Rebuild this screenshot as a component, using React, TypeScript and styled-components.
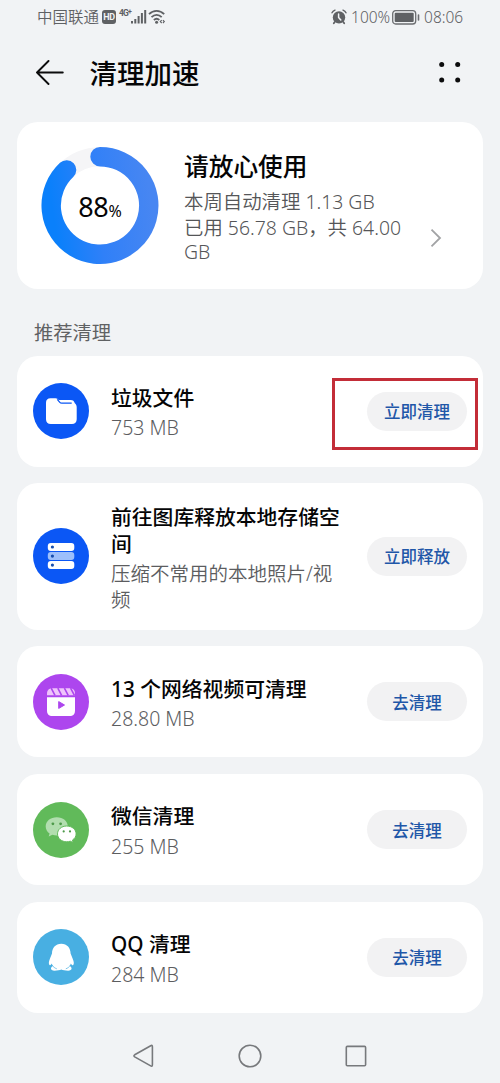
import React from "react";
import styled, { createGlobalStyle } from "styled-components";

const GlobalStyle = createGlobalStyle`
  * { box-sizing: border-box; }
  body {
    margin: 0;
    background: #f1f3f5;
    font-family: "Noto Sans", "Noto Sans CJK SC", sans-serif;
    color: #050506;
  }
`;

const Screen = styled.div`
  width: 500px;
  height: 1083px;
  overflow: hidden;
  display: flex;
  flex-direction: column;
  background: #f1f3f5;
`;

const StatusBar = styled.div`
  height: 34px;
  padding: 0 35px 0 37px;
  display: flex;
  align-items: center;
  justify-content: space-between;
  color: #5f6164;
  font-size: 15.5px;
  font-weight: 350;
  line-height: 20px;
`;

const StatusGroup = styled.div`
  display: flex;
  align-items: center;
  height: 34px;
`;

const StatusText = styled.span<{ $width: number }>`
  width: ${(p) => p.$width}px;
  white-space: nowrap;
`;

const HdBadge = styled.span`
  width: 14px;
  height: 14px;
  margin: 0 3px 0 3px;
  border-radius: 3px;
  background: #5f6164;
  color: #f1f3f5;
  font: 700 9px/14px Roboto, sans-serif;
  letter-spacing: -0.3px;
  text-align: center;
`;

const NetworkType = styled.span`
  display: flex;
  width: 12px;
  height: 17px;
  font: 700 8.5px/9px Roboto, sans-serif;
  letter-spacing: -0.8px;
  white-space: nowrap;
  sup { font-size: 7px; line-height: 6px; }
`;

const Header = styled.header`
  height: 78px;
  padding: 0 38px 0 35px;
  display: flex;
  align-items: center;
`;

const PageTitle = styled.h1`
  margin: 0 0 0 25.5px;
  padding-top: 2px;
  flex: 1;
  font-size: 27.5px;
  line-height: 36px;
  font-weight: 500;
`;

const Hero = styled.section`
  height: 167px;
  margin: 10px 17px 0;
  padding: 0 41px 0 24px;
  display: flex;
  align-items: center;
  background: #fff;
  border-radius: 21px;
`;

const RingBox = styled.div`
  width: 118px;
  height: 118px;
  display: grid;
  place-items: center;
  & > * { grid-area: 1 / 1; }
`;

const Percent = styled.div`
  font-size: 27px;
  line-height: 30px;
  letter-spacing: -0.3px;
  padding-top: 6px;
  small { font-size: 16px; letter-spacing: 0; }
`;

const HeroText = styled.div`
  width: 238px;
  margin-left: 25px;
  white-space: nowrap;
`;

const HeroTitle = styled.h2`
  margin: 0 0 4px;
  font-size: 24.7px;
  line-height: 36px;
  font-weight: 500;
`;

const HeroLine = styled.div<{ $height?: number }>`
  font-size: 19.4px;
  font-weight: 350;
  line-height: ${(p) => p.$height ?? 26}px;
  color: #555658;
`;

const HeroChevron = styled.div`
  display: flex;
  flex: 1;
  justify-content: flex-end;
  padding-top: 64px;
`;

const SectionLabel = styled.h3`
  margin: 0;
  height: 66.5px;
  padding: 30px 0 0 34px;
  font-size: 19.3px;
  line-height: 28px;
  font-weight: 400;
  color: #5f6163;
`;

const List = styled.div`
  display: flex;
  flex-direction: column;
  gap: 16.7px;
  padding: 0 17px;
`;

const Card = styled.section<{ $tall?: boolean }>`
  position: relative;
  height: ${(p) => (p.$tall ? 146.3 : 111.1)}px;
  padding: 0 16px;
  display: flex;
  align-items: center;
  background: #fff;
  border-radius: 21px;
`;

const CardText = styled.div`
  flex: 1;
  margin-left: 22px;
  padding-top: 4px;
  white-space: nowrap;
`;

const CardTitle = styled.div`
  font-size: 20.8px;
  line-height: 27px;
  font-weight: 500;
`;

const CardSub = styled.div`
  margin-top: 3.5px;
  font-size: 19.5px;
  font-weight: 350;
  line-height: 26px;
  color: #5c5d5f;
`;

const PillButton = styled.button`
  width: 100px;
  height: 39px;
  padding: 2px 0 0;
  border: 0;
  border-radius: 20px;
  background: #f2f2f3;
  color: #1f57a8;
  font: 500 16.5px/24px "Noto Sans", "Noto Sans CJK SC", sans-serif;
`;

const Highlight = styled.div`
  position: absolute;
  left: 315px;
  top: 22.5px;
  width: 146px;
  height: 72px;
  border: 3px solid #c32d38;
`;

const NavBar = styled.nav`
  flex: 1;
  padding: 30px 132px 0 132px;
  display: flex;
  justify-content: space-between;
  align-items: flex-start;
`;

const SignalIcon = () => (
  <svg width="17" height="16" viewBox="0 0 17 16" fill="#5f6164">
    <rect x="0" y="12" width="2" height="2.5" />
    <rect x="3.3" y="10" width="2" height="4.5" />
    <rect x="6.6" y="7" width="2" height="7.5" />
    <rect x="9.9" y="4" width="2" height="10.5" />
    <rect x="13.2" y="1" width="2" height="13.5" />
  </svg>
);

const WifiIcon = () => (
  <svg width="18" height="16" viewBox="0 0 18 16" fill="none" stroke="#5f6164" strokeWidth="1.8">
    <path d="M1 5.2C5.4.8 11.8.8 16.2 5.2" />
    <path d="M3.5 8.2C6.6 5.1 10.6 5.1 13.7 8.2" />
    <path d="M5.9 11C7.6 9.3 9.6 9.3 11.3 11" />
    <circle cx="8.6" cy="13.2" r="1.5" fill="#5f6164" stroke="none" />
    <path d="M13.7 11.2l-1.4 1.4 1.4 1.4M14.9 11.2l1.4 1.4-1.4 1.4" strokeWidth="1.1" />
  </svg>
);

const AlarmIcon = () => (
  <svg width="16" height="16" viewBox="0 0 16 16" fill="none" stroke="#5f6164" strokeLinecap="round">
    <circle cx="8" cy="8.4" r="6.2" fill="#5f6164" stroke="none" />
    <path d="M1 3.8C1.5 2.6 2.6 1.6 4 1.1M15 3.8C14.5 2.6 13.4 1.6 12 1.1" strokeWidth="1.4" />
    <path d="M3.7 13L2.8 14.2M12.3 13L13.2 14.2" strokeWidth="1.8" />
    <path d="M7.6 5V8.4L9.8 11" stroke="#f1f3f5" strokeWidth="1.5" />
  </svg>
);

const BatteryIcon = () => (
  <svg width="28" height="15" viewBox="0 0 28 15">
    <rect x="0.7" y="0.7" width="23" height="13.3" rx="3" fill="none" stroke="#6b6d70" strokeWidth="1.3" />
    <rect x="2.7" y="2.7" width="19" height="9.3" rx="1" fill="#5f6164" />
    <rect x="25.7" y="4.2" width="1.6" height="6.6" rx="0.8" fill="#6b6d70" />
  </svg>
);

const BackIcon = () => (
  <svg width="29" height="26" viewBox="0 0 29 26" fill="none" stroke="#0c0c0d" strokeWidth="1.9" strokeLinecap="round" strokeLinejoin="round">
    <path d="M27.8 12.5H2M13.5 1L2 12.5L13.5 24" />
  </svg>
);

const MoreIcon = () => (
  <svg width="24" height="22" viewBox="0 0 24 22" fill="#0c0c0d">
    <circle cx="3.7" cy="2.6" r="2.5" />
    <circle cx="19.7" cy="2.6" r="2.5" />
    <circle cx="3.7" cy="17.9" r="2.5" />
    <circle cx="19.7" cy="17.9" r="2.5" />
  </svg>
);

const UsageRing = () => (
  <svg width="118" height="118" viewBox="0 0 118 118" fill="none">
    <defs>
      <linearGradient id="usage" x1="0" y1="0.45" x2="1" y2="0.3">
        <stop offset="0" stopColor="#0a80fb" />
        <stop offset="0.45" stopColor="#3080f8" />
        <stop offset="1" stopColor="#4786f2" />
      </linearGradient>
    </defs>
    <circle cx="59" cy="58.5" r="48.8" stroke="#f5f5f7" strokeWidth="19" />
    <path d="M59 9.7A48.8 48.8 0 1 1 25.6 22.9" stroke="url(#usage)" strokeWidth="19.4" strokeLinecap="round" />
  </svg>
);

const ChevronIcon = () => (
  <svg width="12" height="20" viewBox="0 0 12 20" fill="none" stroke="#a2a3a5" strokeWidth="1.8">
    <path d="M1.5 1.6L10 10L1.5 18.4" />
  </svg>
);

const FolderIcon = () => (
  <svg width="56" height="56" viewBox="0 0 56 56">
    <circle cx="28" cy="28" r="28" fill="#0b57f5" />
    <path d="M17.5 15.3H22.5C24 15.3 24.8 16 25.6 17H37.5C40 17 41.3 18.2 41.8 20.3C43 21.2 43.7 22.5 43.7 24.2V36.2C43.7 39.3 42 41 38.9 41H17.8C14.7 41 13 39.3 13 36.2V19.8C13 16.9 14.6 15.3 17.5 15.3Z" fill="#fff" />
    <path d="M24.3 16.4L26.6 19.1C27.2 19.8 27.8 20.2 28.8 20.2H38.7" fill="none" stroke="#0b57f5" strokeWidth="1.3" />
  </svg>
);

const StorageIcon = () => (
  <svg width="56" height="56" viewBox="0 0 56 56">
    <circle cx="28" cy="28" r="28" fill="#0b57f5" />
    <rect x="14.8" y="15" width="26.5" height="8" rx="3" fill="#fff" />
    <rect x="14.8" y="24.1" width="26.5" height="8" rx="3" fill="#9dbffb" />
    <rect x="14.8" y="33.1" width="26.5" height="8" rx="3" fill="#fff" />
    <g fill="#174fae">
      <circle cx="19.4" cy="19" r="1.6" />
      <circle cx="19.4" cy="28.1" r="1.6" />
      <circle cx="19.4" cy="37.1" r="1.6" />
    </g>
  </svg>
);

const VideoIcon = () => (
  <svg width="56" height="56" viewBox="0 0 56 56">
    <circle cx="28" cy="28" r="28" fill="#ad46ee" />
    <path d="M14 21.3V19.5C14 16.3 16 14.2 19.2 14.2H37C40.2 14.2 42 16.3 42 19.5V21.3Z" fill="#efc4fb" />
    <path d="M18.2 14.2L22 21.3M24.8 14.2L28.6 21.3M31.4 14.2L35.2 21.3M37.6 14.2L41.4 21.3" stroke="#ad46ee" strokeWidth="1.6" />
    <path d="M14 23.2H42V36.5C42 40.2 40.2 42 36.5 42H19.5C15.8 42 14 40.2 14 36.5Z" fill="#fff" />
    <path d="M25.7 27.6L31.5 31L25.7 34.4Z" fill="#ad46ee" stroke="#ad46ee" strokeWidth="1" strokeLinejoin="round" />
  </svg>
);

const WechatIcon = () => (
  <svg width="56" height="56" viewBox="0 0 56 56">
    <circle cx="28" cy="28" r="28" fill="#61ba5a" />
    <path d="M23.8 15.3C17.5 15.3 12.7 19.2 12.7 24.4C12.7 27.3 14.2 29.8 16.6 31.5L15.7 34.6L19.4 32.8C20.8 33.2 22.2 33.4 23.8 33.4C30 33.4 34.8 29.5 34.8 24.4C34.8 19.2 30 15.3 23.8 15.3Z" fill="#b2deaf" />
    <path d="M33.7 24C28.5 24 24.5 27.5 24.5 31.9C24.5 36.3 28.5 39.8 33.7 39.8C35 39.8 36.2 39.6 37.3 39.2L40.1 40.6L39.5 38C41.8 36.6 43.1 34.4 43.1 31.9C43.1 27.5 39 24 33.7 24Z" fill="#fff" stroke="#61ba5a" strokeWidth="1" />
    <g fill="#4e9a4a">
      <circle cx="19.9" cy="21.8" r="1.4" />
      <circle cx="27.6" cy="21.8" r="1.4" />
      <circle cx="30.7" cy="29.4" r="1.1" />
      <circle cx="37" cy="29.4" r="1.1" />
    </g>
  </svg>
);

const PenguinIcon = () => (
  <svg width="56" height="56" viewBox="0 0 56 56">
    <circle cx="28" cy="28" r="28" fill="#48afe2" />
    <path d="M28.3 14.7C22.5 14.7 19 18.9 19 24.6L17 29.6C15.7 32.6 15.5 35.4 16.5 36.1C17.1 36.5 18 35.6 18.8 34.4C19.1 35.4 19.5 36.3 20 37.1C17.3 38.2 17 41.7 21.5 41.7C24.5 41.7 26.8 41.3 28.3 40.6C29.8 41.3 32 41.7 35.1 41.7C39.6 41.7 39.3 38.2 36.6 37.1C37.1 36.3 37.5 35.4 37.8 34.4C38.6 35.6 39.5 36.5 40.2 36.1C41.2 35.4 41 32.6 39.6 29.6L37.6 24.6C37.6 18.9 34.1 14.7 28.3 14.7Z" fill="#fff" />
    <path d="M19.2 36.2C20.3 38 21.8 39.100 23.800 39.800M37.400 36.200C36.300 38 34.800 39.100 32.800 39.800" fill="none" stroke="#48afe2" strokeWidth="0.7" />
  </svg>
);

const NavBackIcon = () => (
  <svg width="24" height="26" viewBox="0 0 24 26" fill="none" stroke="#77797c" strokeWidth="1.6" strokeLinejoin="round">
    <path d="M18.7 2.7Q20.4 1.7 20.4 3.7V21.7Q20.4 23.9 18.7 22.9L2.7 13.9Q1.2 12.8 2.7 11.8Z" />
  </svg>
);

const NavHomeIcon = () => (
  <svg width="24" height="26" viewBox="0 0 24 26" fill="none" stroke="#77797c" strokeWidth="1.6">
    <circle cx="12" cy="13" r="10.8" />
  </svg>
);

const NavRecentIcon = () => (
  <svg width="24" height="26" viewBox="0 0 24 26" fill="none" stroke="#77797c" strokeWidth="1.6">
    <rect x="2.3" y="3.4" width="19.3" height="19.3" rx="1" />
  </svg>
);

interface Item {
  icon: React.ReactNode;
  title: string[];
  sub: string[];
  action: string;
  highlighted?: boolean;
}

const items: Item[] = [
  { icon: <FolderIcon />, title: ["垃圾文件"], sub: ["753 MB"], action: "立即清理", highlighted: true },
  {
    icon: <StorageIcon />,
    title: ["前往图库释放本地存储空", "间"],
    sub: ["压缩不常用的本地照片/视", "频"],
    action: "立即释放",
  },
  { icon: <VideoIcon />, title: ["13 个网络视频可清理"], sub: ["28.80 MB"], action: "去清理" },
  { icon: <WechatIcon />, title: ["微信清理"], sub: ["255 MB"], action: "去清理" },
  { icon: <PenguinIcon />, title: ["QQ 清理"], sub: ["284 MB"], action: "去清理" },
];

const Lines = ({ lines }: { lines: string[] }) => (
  <>
    {lines.map((line, i) => (
      <React.Fragment key={line}>
        {i > 0 && <br />}
        {line}
      </React.Fragment>
    ))}
  </>
);

export default function App() {
  return (
    <Screen>
      <GlobalStyle />
      <StatusBar>
        <StatusGroup>
          <StatusText $width={62}>中国联通</StatusText>
          <HdBadge>HD</HdBadge>
          <NetworkType>
            4G<sup>+</sup>
          </NetworkType>
          <SignalIcon />
          <WifiIcon />
        </StatusGroup>
        <StatusGroup>
          <AlarmIcon />
          <StatusText $width={45}>&nbsp;100%</StatusText>
          <BatteryIcon />
          <StatusText $width={45}>&nbsp;08:06</StatusText>
        </StatusGroup>
      </StatusBar>
      <Header>
        <BackIcon />
        <PageTitle>清理加速</PageTitle>
        <MoreIcon />
      </Header>
      <Hero>
        <RingBox>
          <UsageRing />
          <Percent>
            88<small>%</small>
          </Percent>
        </RingBox>
        <HeroText>
          <HeroTitle>请放心使用</HeroTitle>
          <HeroLine>本周自动清理 1.13 GB</HeroLine>
          <HeroLine $height={25}>已用 56.78 GB，共 64.00</HeroLine>
          <HeroLine $height={23}>GB</HeroLine>
        </HeroText>
        <HeroChevron>
          <ChevronIcon />
        </HeroChevron>
      </Hero>
      <SectionLabel>推荐清理</SectionLabel>
      <List>
        {items.map((item) => (
          <Card key={item.title[0]} $tall={item.title.length > 1}>
            {item.icon}
            <CardText>
              <CardTitle>
                <Lines lines={item.title} />
              </CardTitle>
              <CardSub>
                <Lines lines={item.sub} />
              </CardSub>
            </CardText>
            <PillButton>{item.action}</PillButton>
            {item.highlighted && <Highlight />}
          </Card>
        ))}
      </List>
      <NavBar>
        <NavBackIcon />
        <NavHomeIcon />
        <NavRecentIcon />
      </NavBar>
    </Screen>
  );
}
